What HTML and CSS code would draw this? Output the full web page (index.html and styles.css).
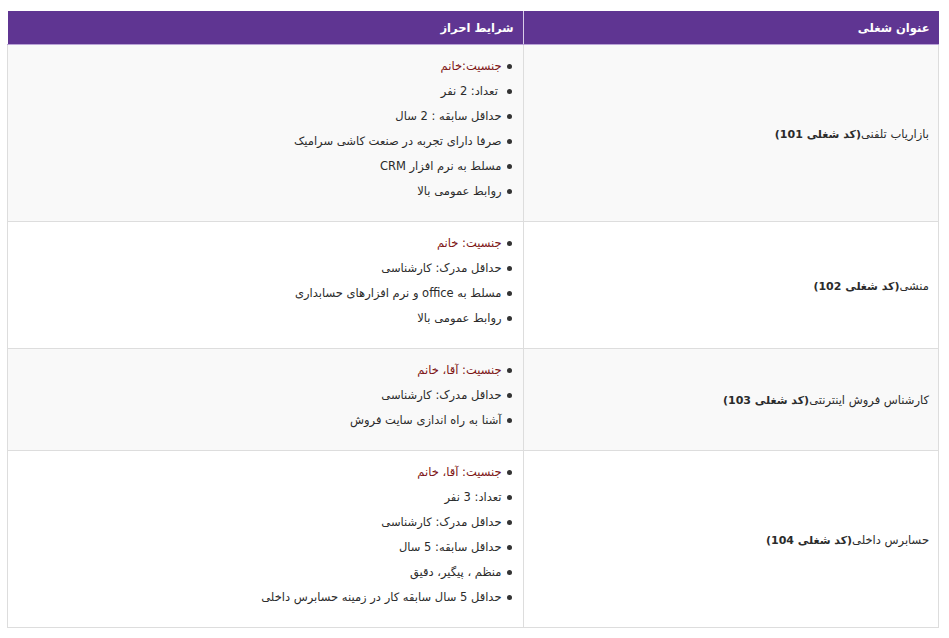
FILE: index.html
```html
<!DOCTYPE html>
<html lang="fa" dir="rtl">
<head>
<meta charset="utf-8">
<title>شرایط احراز</title>
<link rel="stylesheet" href="styles.css">
</head>
<body>
<div class="page">
<table class="jobs">
<thead>
<tr><th class="col-title">عنوان شغلی</th><th class="col-req">شرایط احراز</th></tr>
</thead>
<tbody>
<tr class="odd">
<td class="title">بازاریاب تلفنی<strong>(کد شغلی 101)</strong></td>
<td><ul>
<li><span class="sex">جنسیت:خانم</span></li>
<li> تعداد: 2 نفر</li>
<li>حداقل سابقه : 2 سال</li>
<li>صرفا دارای تجربه در صنعت کاشی سرامیک</li>
<li>مسلط به نرم افزار CRM</li>
<li>روابط عمومی بالا</li>
</ul></td>
</tr>
<tr>
<td class="title">منشی<strong>(کد شغلی 102)</strong></td>
<td><ul>
<li><span class="sex">جنسیت: خانم</span></li>
<li>حداقل مدرک: کارشناسی</li>
<li>مسلط به office و نرم افزارهای حسابداری</li>
<li>روابط عمومی بالا</li>
</ul></td>
</tr>
<tr class="odd">
<td class="title">کارشناس فروش اینترنتی<strong>(کد شغلی 103)</strong></td>
<td><ul>
<li><span class="sex">جنسیت: آقا، خانم</span></li>
<li>حداقل مدرک: کارشناسی</li>
<li>آشنا به راه اندازی سایت فروش</li>
</ul></td>
</tr>
<tr>
<td class="title">حسابرس داخلی<strong>(کد شغلی 104)</strong></td>
<td><ul>
<li><span class="sex">جنسیت: آقا، خانم</span></li>
<li>تعداد: 3 نفر</li>
<li>حداقل مدرک: کارشناسی</li>
<li>حداقل سابقه: 5 سال</li>
<li>منظم ، پیگیر، دقیق</li>
<li>حداقل 5 سال سابقه کار در زمینه حسابرس داخلی</li>
</ul></td>
</tr>
</tbody>
</table>
</div>
</body>
</html>
```

FILE: styles.css
```css
html, body {
  margin: 0;
  padding: 0;
  background: #ffffff;
}
.page {
  padding: 11px 10px 0 7px;
  font-family: "DejaVu Sans", "Noto Sans", sans-serif;
  font-size: 11.5px;
  color: #2b2b2b;
}
.jobs {
  width: 932px;
  border-collapse: collapse;
  table-layout: fixed;
}
.jobs th {
  background: #5f3592;
  color: #ffffff;
  font-weight: bold;
  font-size: 11.5px;
  text-align: right;
  height: 33px;
  padding: 0 9px;
  border-bottom: 1px solid #b9a3d6;
  border-left: 1px solid #d9cde8;
  vertical-align: middle;
}
.jobs th.col-title {
  width: 397px;
}
.jobs th.col-req {
  border-left: none;
}
.jobs td {
  border: 1px solid #dddddd;
  padding: 9px 9px 8px 9px;
  text-align: right;
  vertical-align: top;
}
.jobs td.title {
  vertical-align: middle;
}
.jobs td.title strong {
  font-size: 11px;
}
.jobs tr.odd td {
  background: #f9f9f9;
}
.jobs ul {
  margin: 0 0 9px 0;
  padding: 0 2px 0 0;
  list-style: none;
}
.jobs li {
  line-height: 25px;
}
.jobs li::before {
  content: "";
  display: inline-block;
  width: 5px;
  height: 5px;
  border-radius: 50%;
  background: #333333;
  margin-left: 5px;
  vertical-align: middle;
}
.jobs .sex {
  color: #7d1414;
}
```
